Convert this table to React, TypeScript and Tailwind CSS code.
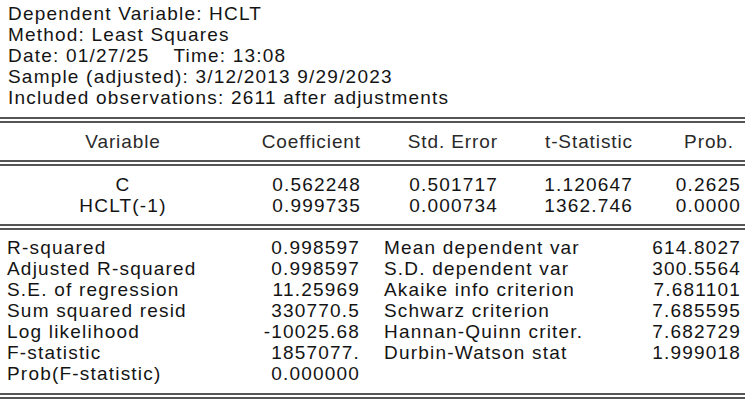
import React from "react";

const DoubleRule = () => (
  <div className="h-[6px] w-[745px] border-y-2 border-[#555555]" />
);

const coefRows = [
  ["C", "0.562248", "0.501717", "1.120647", "0.2625"],
  ["HCLT(-1)", "0.999735", "0.000734", "1362.746", "0.0000"],
];

const stats: [string, string, string, string][] = [
  ["R-squared", "0.998597", "Mean dependent var", "614.8027"],
  ["Adjusted R-squared", "0.998597", "S.D. dependent var", "300.5564"],
  ["S.E. of regression", "11.25969", "Akaike info criterion", "7.681101"],
  ["Sum squared resid", "330770.5", "Schwarz criterion", "7.685595"],
  ["Log likelihood", "-10025.68", "Hannan-Quinn criter.", "7.682729"],
  ["F-statistic", "1857077.", "Durbin-Watson stat", "1.999018"],
  ["Prob(F-statistic)", "0.000000", "", ""],
];

export default function App() {
  return (
    <div
      className="w-[753px] h-[407px] bg-white text-[#141414] text-[19px] leading-[21px] tracking-[1.2px] overflow-hidden"
      style={{ fontFamily: '"Liberation Sans", Arial, sans-serif' }}
    >
      <div className="pl-[8px] pt-[3px]">
        <div>Dependent Variable: HCLT</div>
        <div>Method: Least Squares</div>
        <div>
          Date: 01/27/25<span className="inline-block w-[24px]" />Time: 13:08
        </div>
        <div>Sample (adjusted): 3/12/2013 9/29/2023</div>
        <div>Included observations: 2611 after adjustments</div>
      </div>
      <div className="mt-[9px]">
        <DoubleRule />
      </div>
      <div className="grid grid-cols-[246px_115px_137px_135px_108px] h-[37px] items-center text-[#2a2a2a] tracking-[0.9px]">
        <div className="text-center">Variable</div>
        <div className="text-right">Coefficient</div>
        <div className="text-right">Std. Error</div>
        <div className="text-right">t-Statistic</div>
        <div className="text-right pr-[7px]">Prob.</div>
      </div>
      <DoubleRule />
      <div className="pt-[8px] pb-[8px]">
        {coefRows.map((r) => (
          <div
            key={r[0]}
            className="grid grid-cols-[246px_115px_137px_135px_108px]"
          >
            <div className="text-center">{r[0]}</div>
            <div className="text-right">{r[1]}</div>
            <div className="text-right">{r[2]}</div>
            <div className="text-right">{r[3]}</div>
            <div className="text-right">{r[4]}</div>
          </div>
        ))}
      </div>
      <DoubleRule />
      <div className="pt-[7px] pb-[9px] pl-[7px]">
        {stats.map((r) => (
          <div
            key={r[0]}
            className="grid grid-cols-[250px_103px_281px_100px] h-[21px]"
          >
            <div>{r[0]}</div>
            <div className="text-right">{r[1]}</div>
            <div className="pl-[24px]">{r[2]}</div>
            <div className="text-right">{r[3]}</div>
          </div>
        ))}
      </div>
      <DoubleRule />
    </div>
  );
}
